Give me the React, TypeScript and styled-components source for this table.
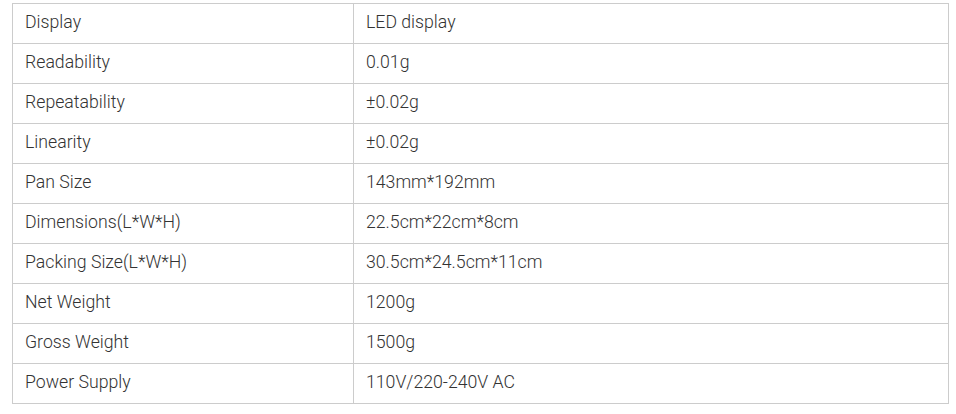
import React from 'react';
import styled, { createGlobalStyle } from 'styled-components';

const GlobalStyle = createGlobalStyle`
    body {
        margin: 0;
        background: #ffffff;
        font-family: Roboto, "Liberation Sans", Arial, sans-serif;
    }
`;

const Page = styled.div`
    padding: 3px 8px 0 12px;
`;

const SpecTable = styled.table`
    width: 937px;
    border-collapse: collapse;
    table-layout: fixed;
`;

const Row = styled.tr`
    height: 40px;
`;

const Cell = styled.td<{ $width?: number }>`
    border: 1px solid #cccccc;
    padding: 0 12px 3px;
    font-size: 17.7px;
    font-weight: 300;
    color: #333333;
    vertical-align: middle;
    width: ${props => (props.$width ? `${props.$width}px` : 'auto')};
    white-space: nowrap;
`;

const SPECS: [string, string][] = [
    ['Display', 'LED display'],
    ['Readability', '0.01g'],
    ['Repeatability', '±0.02g'],
    ['Linearity', '±0.02g'],
    ['Pan Size', '143mm*192mm'],
    ['Dimensions(L*W*H)', '22.5cm*22cm*8cm'],
    ['Packing Size(L*W*H)', '30.5cm*24.5cm*11cm'],
    ['Net Weight', '1200g'],
    ['Gross Weight', '1500g'],
    ['Power Supply', '110V/220-240V AC'],
];

const App: React.FC = () => (
    <>
        <GlobalStyle />
        <Page>
            <SpecTable>
                <tbody>
                    {SPECS.map(([label, value], i) => (
                        <Row key={label}>
                            <Cell $width={i === 0 ? 316 : undefined}>{label}</Cell>
                            <Cell>{value}</Cell>
                        </Row>
                    ))}
                </tbody>
            </SpecTable>
        </Page>
    </>
);

export default App;
